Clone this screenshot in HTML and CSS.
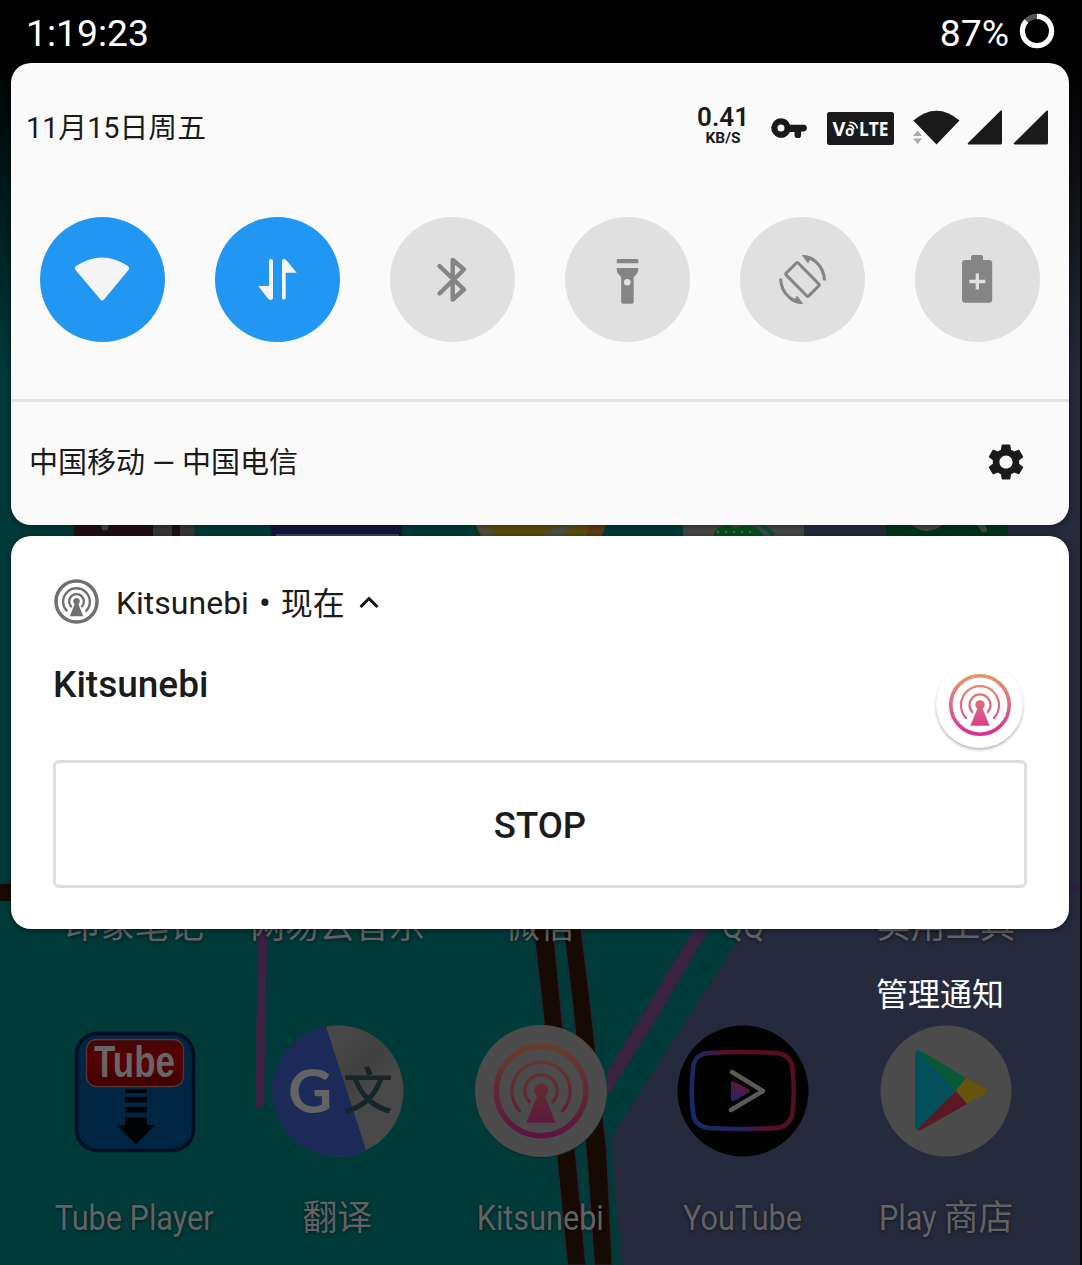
FILE: index.html
```html
<!DOCTYPE html>
<html lang="zh-CN">
<head>
<meta charset="utf-8">
<title>通知栏</title>
<link rel="stylesheet" href="styles.css">
</head>
<body>
<svg class="defs" aria-hidden="true">
  <defs>
    <linearGradient id="sunset" gradientUnits="userSpaceOnUse" x1="0" y1="-31" x2="0" y2="31"><stop offset="0" stop-color="#ea9560"/><stop offset=".45" stop-color="#df6d80"/><stop offset="1" stop-color="#da2b95"/></linearGradient>
    <linearGradient id="sunset-dim" gradientUnits="userSpaceOnUse" x1="0" y1="-31" x2="0" y2="31"><stop offset="0" stop-color="#673c2b"/><stop offset=".45" stop-color="#622b33"/><stop offset="1" stop-color="#5c123f"/></linearGradient>
    <symbol id="antenna" viewBox="-32 -32 64 64">
      <circle class="ink-line ring" r="29.200"/>
      <path class="ink-line wave" d="M-14 13A19 19 0 1 1 14 13"/>
      <path class="ink-line wave" d="M-7.800 7A10.500 10.500 0 1 1 7.800 7"/>
      <path class="ink-fill" d="M-2.600 3.500A4.700 4.700 0 1 1 2.600 3.500L9.600 20.800H-9.600Z"/>
    </symbol>
  </defs>
</svg>
<div class="screen">
  <svg class="wallpaper" viewBox="0 0 1082 1265">
    <defs><linearGradient id="fade" x1="0" y1="0" x2="0" y2="1"><stop offset="0" stop-color="#000"/><stop offset=".13" stop-color="#000"/><stop offset=".9" stop-color="#000" stop-opacity="0"/></linearGradient></defs>
    <rect width="1082" height="1265" fill="#003b3a"/>
    <path fill="#262a3d" d="M804 0H1082V1265H621L611 1137 745 929 804 800Z"/>
    <path fill="#3a2241" d="M694 929h15L662 1010 607 1097V1073L645 1010Z"/>
    <path fill="#3a2241" d="M258 929h9.500L264 1106q-5 4-9 0Z"/>
    <path fill="#170a03" stroke="#30203a" d="M533.500 929H553L561 1010 577 1170 585.600 1265H567.700L558.300 1170 543 1010ZM563.500 929H581L591 1010 606.500 1150 612 1265H594.500L588 1170 573.500 1010Z"/>
    <path fill="#170a03" d="M0 884h12v17H0z"/>
    <path fill="#2f2140" d="M1069 884h11v10h-11z"/>
    <g>
      <path fill="#200f17" d="M74 520h106v18H74z"/><path fill="#373737" d="M153 520h19v18h-19zM180 520h14.500v18H180z"/><circle cx="105" cy="527" r="3.500" fill="#484848"/>
      <path fill="#15153f" d="M269 520H402V538H272Z"/><path fill="#43435a" d="M276 534h123v2H276z"/>
      <path fill="#5a4e0d" d="M474 522H606L601 538H482Z"/><path fill="#514e42" d="M476 525l8 11h6l6-5-8-1-8-7zM573 525h-13l-18 11h19z"/><path fill="#5e3d10" d="M590 524h16l-4 12h-16z"/>
      <path fill="#474747" d="M683 520H804V538H683Z"/><path fill="#07501d" d="M713 537q2-10 10-11 8-2 12 3 6-4 14-3 12 1 15 11Z"/><path fill="none" stroke="#07503c" stroke-width="4" d="M761 524l13 11"/><path fill="none" stroke="#636363" stroke-dasharray="2 6" stroke-width="2" d="M717 532h39"/>
      <path fill="#00351b" d="M886 520h122v16H886z"/><path fill="#484848" d="M911 524q15 14 33 0zM976 524l6 8q6 1 5-3l-2-5z"/>
    </g>
    <rect width="1082" height="420" fill="url(#fade)"/>
    <path fill="#000" d="M1080 0h2v1265h-2z"/>
  </svg>

  <header class="status-bar">
    <span>1:19:23</span>
    <span class="battery">87%
      <svg width="36" height="36" viewBox="0 0 36 36" fill="none" stroke-width="5.200"><circle cx="18" cy="18" r="14.600" stroke="#555"/><circle cx="18" cy="18" r="14.600" stroke="#fff" pathLength="100" stroke-dasharray="87 13" transform="rotate(-90 18 18)"/></svg>
    </span>
  </header>

  <section class="quick-settings">
    <div class="qs-head">
      <span class="date">11月15日周五</span>
      <div class="signals">
        <div class="speed"><b>0.41</b><small>KB/S</small></div>
        <svg class="key" width="36" height="20" viewBox="0 0 36 20"><path fill-rule="evenodd" d="M10 .2A9.800 9.800 0 1 0 19 14H23.500V17a3.300 3.300 0 0 0 6.600 0V13.500H32.500a3.300 3.300 0 0 0 0-6.800H19A9.800 9.800 0 0 0 10 .2ZM10 6.500a3.500 3.500 0 1 1 0 7 3.500 3.500 0 0 1 0-7Z"/></svg>
        <svg class="volte" width="67" height="33" viewBox="0 0 67 33"><rect width="67" height="33" rx="2.500"/><text x="5.500" y="24" font-size="19.500" textLength="13" lengthAdjust="spacingAndGlyphs">V</text><text x="18" y="24" font-size="15">o</text><text x="32" y="24" font-size="19.500" textLength="29.500" lengthAdjust="spacingAndGlyphs">LTE</text><path fill="none" stroke="#fafafa" stroke-width="1.700" d="M21.500 13.500q4-1 5.500 4M22.500 10.500q6.500-.5 8 6"/></svg>
        <svg class="wifi" width="47" height="35" viewBox="0 0 47 35"><path d="M.3 10.500Q23.500-9 46.500 10.500L23.500 34.500Z"/><path stroke="#fafafa" fill="#aaa" stroke-width="2" paint-order="stroke" d="M4.500 20.500l4.500 5.500H0ZM4.500 34L0 28.500H9Z"/></svg>
        <svg class="bar" width="35" height="35" viewBox="0 0 35 35"><path d="M35 1V33q0 1.500-1.500 1.500H2Q0 34.500 1 33L33.500.8Q35 0 35 1Z"/></svg>
        <svg class="bar" width="35" height="35" viewBox="0 0 35 35"><path d="M35 1V33q0 1.500-1.500 1.500H2Q0 34.500 1 33L33.500.8Q35 0 35 1Z"/></svg>
      </div>
    </div>
    <div class="tiles">
      <svg class="tile on" viewBox="0 0 125 125"><path d="M36 49Q62 32 88 49q2 2 .5 4L64 82.500q-2 2-3.500 0L35.500 53q-1.500-2 .5-4Z"/></svg>
      <svg class="tile on" viewBox="0 0 125 125"><path d="M54 44q0-2 2-2t2 2V81q0 2-2.500 2-1.500 0-3-2L43.300 69H54ZM67 44q0-2 2-2 1.500 0 3 2L81.700 55.700H70.700V81q0 1.500-1.800 1.500T67 81Z"/></svg>
      <svg class="tile" viewBox="0 0 125 125"><path class="line" stroke-width="4.400" stroke-linecap="round" stroke-linejoin="round" d="M49.500 49 74 72.500 62.700 82.500V43L74 52.500 49.500 76.500"/></svg>
      <svg class="tile" viewBox="0 0 125 125"><path fill-rule="evenodd" d="M53 42H72q1.300 0 1.300 1.300v3H51.700v-3Q51.700 42 53 42ZM51.700 51H73.300V53q0 2.500-2 4.500-2.600 2-2.600 4V85q0 1.700-1.700 1.700H58q-1.800 0-1.800-1.700V61.500q0-2-2.500-4-2-2-2-4.500ZM62.300 62a3.300 3.300 0 1 0 0 6.600 3.300 3.300 0 0 0 0-6.600Z"/></svg>
      <svg class="tile" viewBox="0 0 125 125"><rect class="line" stroke-width="3" x="46.500" y="54" width="32" height="17" rx="1.500" transform="rotate(45.500 62.500 62.500)"/><g id="turn"><path d="M61.700 38q9-.5 15 5.500 9 8 9.300 20H83q-.6-10-7-16.500-2.500-2.500-6-4L68 46.500Z"/></g><use href="#turn" transform="rotate(180 62.500 62.500)"/></svg>
      <svg class="tile" viewBox="0 0 125 125"><path d="M58 38h8q2 0 2 2v3H74q3.200 0 3.200 3V82.500q0 3.200-3.200 3.200H50.300q-3.300 0-3.300-3.200V46q0-3 3.300-3H56V40q0-2 2-2Z"/><path stroke="#e0e0e0" stroke-width="3.300" d="M54.300 64.500h16M62.300 56.500v16"/></svg>
    </div>
    <footer class="qs-foot">
      <span>中国移动 — 中国电信</span>
      <svg width="44" height="44" viewBox="0 0 24 24"><path d="M19.140 12.940c.04-.3.060-.61.060-.94 0-.32-.02-.64-.07-.94l2.030-1.580c.18-.14.230-.41.120-.61l-1.920-3.320c-.12-.22-.37-.29-.59-.22l-2.390.96c-.5-.38-1.030-.7-1.620-.94l-.36-2.540c-.04-.24-.24-.41-.48-.41h-3.840c-.24 0-.43.170-.47.410l-.36 2.540c-.59.240-1.130.57-1.620.94l-2.390-.96c-.22-.08-.47 0-.59.220L2.740 8.870c-.12.210-.08.470.12.610l2.030 1.580c-.05.300-.09.630-.09.940s.020.640.070.940l-2.030 1.580c-.18.140-.23.410-.12.610l1.920 3.320c.12.220.37.290.59.220l2.390-.96c.5.380 1.030.7 1.620.94l.36 2.540c.05.240.24.410.48.410h3.840c.24 0 .44-.17.47-.41l.36-2.540c.59-.24 1.130-.56 1.620-.94l2.390.96c.22.080.47 0 .59-.22l1.920-3.320c.12-.22.070-.47-.12-.61l-2.010-1.580zM12 15.600c-1.980 0-3.600-1.620-3.600-3.600s1.620-3.600 3.600-3.600 3.600 1.620 3.600 3.600-1.620 3.600-3.600 3.600z"/></svg>
    </footer>
  </section>

  <article class="notification">
    <div class="app-line">
      <svg class="small-icon" width="45" height="45"><use href="#antenna"/></svg>
      <span class="app-name">Kitsunebi</span><span class="dot">•</span><span class="when">现在</span>
      <svg class="chevron" width="20" height="13" viewBox="0 0 20 13"><path fill="none" stroke="#111" stroke-width="3" d="M1.500 11 10 2.500 18.500 11"/></svg>
    </div>
    <div class="summary">
      <h2>Kitsunebi</h2>
      <div class="avatar"><svg width="64" height="64"><use href="#antenna"/></svg></div>
    </div>
    <button class="stop">STOP</button>
  </article>

  <div class="labels upper">
    <span>印象笔记</span><span>网易云音乐</span><span>微信</span><span class="latin">QQ</span><span>实用工具</span>
  </div>
  <div class="manage">管理通知</div>
  <div class="apps">
    <svg viewBox="0 0 132 132"><defs><linearGradient id="red" x1="0" y1="0" x2="0" y2="1"><stop offset="0" stop-color="#420808"/><stop offset=".4" stop-color="#590000"/><stop offset="1" stop-color="#400000"/></linearGradient></defs><rect x="7.500" y="8.500" width="117" height="117" rx="21" fill="#002643" stroke="#000d22" stroke-width="3.500"/><rect x="17.500" y="14.500" width="97" height="47" rx="10" fill="url(#red)" stroke="#5b3335" stroke-width="1.300"/><text class="tube" x="25" y="52" textLength="81" lengthAdjust="spacingAndGlyphs">Tube</text><path fill="#020304" d="M56 64.500h22v3.500H56zM56 72h22v5.500H56zM56 82h22v5.500H56zM56 92.500h22V100h8.500L67 119.500 47.500 100H56z"/></svg>
    <svg viewBox="0 0 132 132"><defs><linearGradient id="paper" x1="0" y1="0" x2="1" y2="1"><stop offset=".3" stop-color="#484848"/><stop offset=".5" stop-color="#404040"/><stop offset=".65" stop-color="#484848"/></linearGradient></defs><circle cx="66" cy="66" r="65.500" fill="url(#paper)"/><path fill="#1b2a59" d="M54 1.500 94 125A65.500 65.500 0 1 1 54 1.500Z"/><text class="google" x="16" y="87.500">G</text><text class="hanzi" x="71" y="84">文</text></svg>
    <svg viewBox="0 0 132 132"><circle cx="66" cy="67.500" r="66" fill="#002927" opacity=".6"/><circle cx="66" cy="66" r="66" fill="#4b4b4b"/><use class="dim-antenna" href="#antenna" x="17" y="17" width="98" height="98"/></svg>
    <svg viewBox="0 0 132 132"><defs><linearGradient id="vanced" x1="0" y1=".7" x2="1" y2=".3"><stop offset="0" stop-color="#172b65"/><stop offset=".3" stop-color="#25235a"/><stop offset=".55" stop-color="#551028"/><stop offset="1" stop-color="#590d20"/></linearGradient><linearGradient id="tri" x1="0" y1="1" x2=".3" y2="0"><stop offset=".2" stop-color="#252663"/><stop offset="1" stop-color="#661533"/></linearGradient></defs><circle cx="66" cy="66" r="65.500" fill="#020202"/><path fill="none" stroke="url(#vanced)" stroke-width="4.500" d="M32 28Q66 26 99 28 114 29 115.500 44 118 66 115.500 87 114 101 99 103 66 105 32 103 17 101 16 87 13.500 66 16 44 17 29 32 28Z"/><path fill="url(#tri)" d="M54 58q0-3 3-1.500l15 8q2 1.500 0 3l-14 8q-4 2-4-2Z"/><path fill="none" stroke="#5b5b5b" stroke-width="4.500" stroke-linecap="round" stroke-linejoin="round" d="M55 47 86 66 54 85"/></svg>
    <svg viewBox="0 0 132 132"><circle cx="66" cy="66" r="65.500" fill="#4b4b4b"/><path fill="#03505c" d="M35 29q0-4 3-3.500L76 66 38 105q-3 0-3-3Z"/><path fill="#065837" d="M37 25.500q2-.5 4 .5L86 53 76 66Z"/><path fill="#66530e" d="M86 53l19 10q4 3 0 6L86 79 76 66Z"/><path fill="#5c1823" d="M76 66l11 13-46 26q-2 1-4 0Z"/></svg>
  </div>
  <div class="labels lower">
    <span class="latin">Tube Player</span><span>翻译</span><span class="latin">Kitsunebi</span><span class="latin">YouTube</span><span><i class="latin-part">Play </i>商店</span>
  </div>
</div>
</body>
</html>
```

FILE: styles.css
```css
* { box-sizing: border-box; }
body { margin: 0; background: #000; font-family: Roboto, "Noto Sans CJK SC", sans-serif; }
.defs { position: absolute; width: 0; height: 0; }
.ink-line { fill: none; stroke: var(--ink); stroke-linecap: round; }
.ring { stroke-width: var(--ring, 3.6px); }
.wave { stroke-width: var(--wave, 2.2px); }
.ink-fill { fill: var(--ink); }

.screen { position: relative; z-index: 0; width: 1082px; height: 1265px; overflow: hidden; display: flex; flex-direction: column; }
.wallpaper { position: absolute; inset: 0; z-index: -2; width: 1082px; height: 1265px; }

.status-bar { flex: none; height: 63px; padding: 3px 27px 0 26px; display: flex; align-items: center; justify-content: space-between; color: #fff; font-size: 37.3px; line-height: 60px; }
.battery { display: flex; align-items: center; gap: 10px; }
.battery svg { margin-top: -5px; }

.quick-settings { flex: none; width: 1058px; height: 462px; margin-left: 11px; border-radius: 20px; background: #fafafa; color: #1a1a1a; box-shadow: 0 1px 6px rgba(0, 0, 0, .5); display: flex; flex-direction: column; }
.qs-head { height: 154px; padding: 0 21px 25px 15px; display: flex; align-items: center; justify-content: space-between; }
.date { font-size: 28.8px; padding-bottom: 5px; }
.signals { display: flex; align-items: center; fill: #1a1a1a; }
.speed { display: flex; flex-direction: column; align-items: center; margin-right: 22px; margin-top: -3px; }
.speed b { height: 24px; font-size: 26px; line-height: 23px; font-weight: 600; }
.speed small { height: 17px; font-size: 15.5px; line-height: 17px; font-weight: 700; }
.key { margin-right: 20px; }
.volte { margin-right: 19px; margin-top: 1px; }
.volte text { fill: #fafafa; font-weight: 700; font-family: "Open Sans", sans-serif; }
.wifi { margin-right: 7px; }
.bar + .bar { margin-left: 11px; }
.tiles { height: 182px; padding: 0 29px; display: flex; justify-content: space-between; }
.tile { width: 125px; height: 125px; border-radius: 50%; background: #e0e0e0; fill: #858585; }
.tile .line { fill: none; stroke: #858585; }
.tile.on { background: #2196f3; fill: #f5f5f5; }
.qs-foot { flex: 1; border-top: 3px solid #e3e3e3; padding: 0 41px 3px 18px; display: flex; align-items: center; justify-content: space-between; font-size: 29px; }
.qs-foot span { padding-bottom: 4px; }
.qs-foot svg { fill: #1a1a1a; }

.notification { flex: none; width: 1058px; height: 393px; margin: 11px 0 0 11px; padding: 43px 42px; border-radius: 20px; background: #fff; color: #1c1c1c; box-shadow: 0 1px 6px rgba(0, 0, 0, .5); }
.app-line { height: 45px; display: flex; align-items: center; font-size: 32px; }
.small-icon { --ink: #707070; --ring: 5px; --wave: 3.4px; margin: 0 17px 0 1px; }
.app-name { padding-top: 2px; }
.when { padding-bottom: 2px; }
.dot { margin: 4px 10px 0; font-size: 35px; }
.chevron { margin-left: 14px; margin-top: 2px; }
.summary { height: 136px; display: flex; justify-content: space-between; }
h2 { margin: 39px 0 0; font-size: 37px; line-height: 44px; font-weight: 500; }
.avatar { --ink: url(#sunset); width: 87px; height: 87px; margin: 37px 4px 0 0; border-radius: 50%; display: grid; place-items: center; background: #fff; box-shadow: 0 2px 3px rgba(0, 0, 0, .28); }
.stop { display: block; width: 974px; height: 128px; padding: 3px 0 0; background: #fff; border: 3px solid #dedede; border-radius: 6px; color: #1c1c1c; font: 500 36.5px Roboto, sans-serif; }

.labels { flex: none; display: grid; grid-template-columns: repeat(5, 202.75px); justify-content: center; justify-items: center; margin-right: 2px; color: #626262; font-size: 34.8px; line-height: 50px; height: 50px; white-space: nowrap; text-shadow: 0 1px 4px rgba(0, 0, 0, .6); }
.labels .latin { transform: scaleX(.88); }
.latin-part { display: inline-block; margin-left: -8px; font-style: normal; white-space: pre; transform: scaleX(.88); transform-origin: right; }
.upper { position: relative; z-index: -1; margin-top: -28px; }
.manage { flex: none; height: 74px; margin-right: 78px; padding-top: 15px; text-align: right; color: #fff; font-size: 32px; line-height: 58px; }
.apps { flex: none; display: grid; grid-template-columns: repeat(5, 202.75px); justify-content: center; justify-items: center; margin-right: 1px; }
.apps svg { width: 132px; height: 132px; overflow: visible; }
.dim-antenna { --ink: url(#sunset-dim); }
.tube { font: 700 44px "Liberation Sans", sans-serif; fill: #666; }
.google { font: 700 61px Lato, sans-serif; fill: #636363; }
.hanzi { font: 500 50px "Noto Sans CJK SC", sans-serif; fill: #172429; }
.lower { margin-top: 36px; }
```
